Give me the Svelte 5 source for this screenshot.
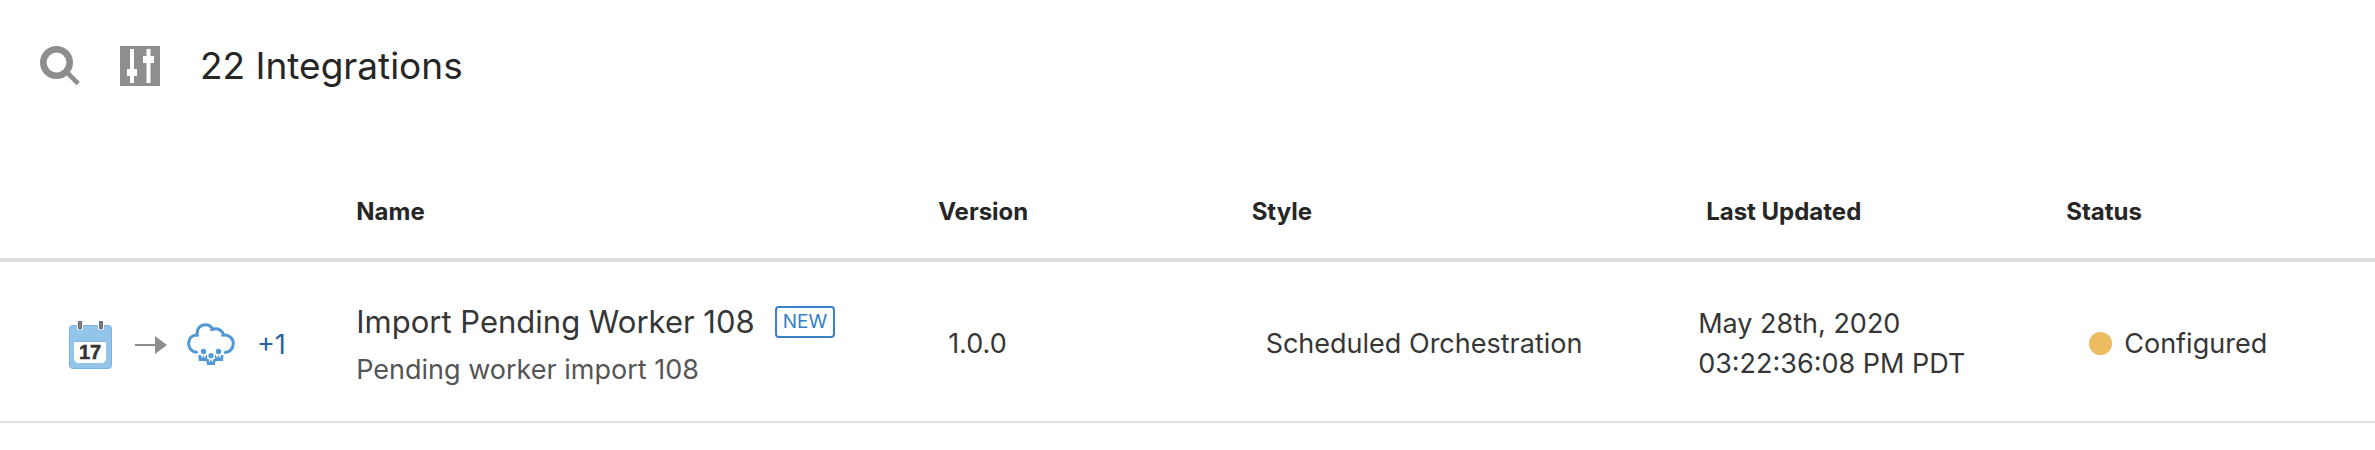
<script>
  const columns = ['Name', 'Version', 'Style', 'Last Updated', 'Status'];
  const rows = [
    {
      name: 'Import Pending Worker',
      number: '108',
      summary: 'Pending worker import 108',
      isNew: true,
      more: 1,
      version: '1.0.0',
      style: 'Scheduled Orchestration',
      date: 'May 28th, 2020',
      time: '03:22:36:08 PM PDT',
      status: 'Configured'
    }
  ];
</script>

<main>
  <header class="toolbar">
    <button type="button" aria-label="Search">
      <svg width="40" height="40" viewBox="0 0 40 40">
        <circle cx="16.5" cy="16.5" r="13.2" fill="none" stroke="#8d8e8f" stroke-width="6.6" />
        <path d="M26 25.5L38.2 37.7" stroke="#8d8e8f" stroke-width="4.6" />
      </svg>
    </button>
    <button type="button" aria-label="Filter">
      <svg width="40" height="40" viewBox="0 0 40 40">
        <path fill="#8d8e8f" d="M0 0h40v40H0z" />
        <path fill="#fff" d="M10 3h4v20h3v7h-3v7h-4v-7H7v-7h3zM26.500 3h4v7h3.500v7h-3.500v20h-4v-20h-3.500v-7h3.500z" />
      </svg>
    </button>
    <h1>22 Integrations</h1>
  </header>

  <table>
    <colgroup>
      <col class="c-icons" /><col class="c-name" /><col class="c-version" />
      <col class="c-style" /><col class="c-updated" /><col class="c-status" />
    </colgroup>
    <thead>
      <tr>
        <td></td>
        {#each columns as column}
          <th scope="col" class:updated={column === 'Last Updated'}>{column}</th>
        {/each}
      </tr>
    </thead>
    <tbody>
      {#each rows as row}
        <tr>
          <td>
            <div class="flow">
              <svg class="calendar" width="44" height="50" viewBox="0 0 44 50" aria-hidden="true">
                <rect x=".5" y="5.500" width="42" height="43" rx="3" fill="#93c4ea" stroke="#78b3e3" />
                <path d="M8 0v9.500h6V0M29 0v9.500h6V0" fill="#fff" />
                <path d="M9.500 1.500h3v7h-3zM30.500 1.500h3v7h-3z" fill="#7f7f83" stroke="#66666a" />
                <path d="M5 21.500h32V40l-3 3H8l-3-3z" fill="#fff" />
                <path d="M5 21.500h32" stroke="#7fb7e4" />
                <text x="21" y="39" text-anchor="middle">17</text>
              </svg>
              <svg class="arrow" width="32" height="18" viewBox="0 0 32 18" aria-hidden="true">
                <path fill="#8d8e8f" d="M0 8h20V0l12 9-12 9v-8H0z" />
              </svg>
              <svg class="cloud" width="48" height="44" viewBox="0 0 48 44" aria-hidden="true">
                <g fill="none" stroke="#5199d6" stroke-width="3" stroke-linecap="round">
                  <path d="M9.500 29.300C4.800 28.700 1.600 25.300 1.600 20.300C1.600 15.600 5 12.200 10.200 11.800C9.500 6.100 13.100 1.700 18.400 1.700C21.900 1.700 24.400 3.600 25.900 6.200C30.800 4.700 35.400 7.500 36.900 12.100C42.300 11.700 46.300 15.500 46.300 20.600C46.300 25.700 42.700 29.300 38.200 29.500" />
                  <path d="M10.200 11.800V13M25.900 6.200L24 7M36.900 12.100L35 12.500" stroke-width="2" />
                </g>
                <g fill="#5199d6">
                  <circle cx="16.500" cy="28.500" r="2.700" /><circle cx="31.500" cy="28.500" r="2.700" />
                  <path d="M11.300 32h2.700l1 3.200 1.500-3.200 1.500 3.200 1-3.200h1v6h-8.200zM28 32h1l1 3.200 1.500-3.200 1.500 3.200 1-3.200h2.500l-.5 6h-8z" />
                  <path d="M19 36h2.500l1 3.500L24 36l1.500 3.500 1-3.500H29l-1.200 6h-7.600z" />
                  <circle cx="24" cy="32.700" r="3.300" fill="#fff" /><circle cx="24" cy="32.700" r="2.600" />
                </g>
              </svg>
              <button type="button" class="more">+{row.more}</button>
            </div>
          </td>
          <td class="name">
            <div class="title">
              <span>{row.name} {row.number}</span>
              {#if row.isNew}<span class="badge">NEW</span>{/if}
            </div>
            <div class="summary">{row.summary}</div>
          </td>
          <td class="version">{row.version}</td>
          <td class="style">{row.style}</td>
          <td><div>{row.date}</div><div>{row.time}</div></td>
          <td class="status"><div class="state"><i></i>{row.status}</div></td>
        </tr>
      {/each}
    </tbody>
  </table>
</main>

<style>
  :global(body) {
    margin: 0;
    background: #fff;
  }
  main {
    font-family: Inter, 'Liberation Sans', sans-serif;
    color: #363636;
  }
  button {
    border: 0;
    padding: 0;
    background: none;
    font: inherit;
    cursor: pointer;
  }
  svg {
    display: block;
    flex: none;
  }
  .toolbar {
    display: flex;
    align-items: center;
    gap: 40px;
    padding: 38px 40px 102px;
  }
  h1 {
    margin: 0;
    font-size: 37px;
    line-height: 56px;
    font-weight: 400;
    color: #262626;
  }
  table {
    width: 100%;
    table-layout: fixed;
    border-collapse: separate;
    border-spacing: 0;
  }
  .c-icons { width: 15%; }
  .c-name { width: 24.5%; }
  .c-version { width: 13.2%; }
  .c-style { width: 18.8%; }
  .c-updated { width: 15.5%; }
  .c-status { width: 13%; }
  th,
  td {
    box-sizing: border-box;
    padding: 0;
    text-align: left;
    white-space: nowrap;
  }
  thead th,
  thead td {
    padding-bottom: 30px;
    border-bottom: 4px solid #e0e0e0;
    font-size: 24px;
    line-height: 32px;
    font-weight: 700;
    color: #262626;
  }
  thead th.updated {
    padding-left: 8px;
  }
  tbody td {
    height: 161px;
    padding-top: 4px;
    border-bottom: 2px solid #e0e0e0;
    font-size: 27px;
    line-height: 40px;
    vertical-align: middle;
  }
  tbody td.name { padding-top: 8px; }
  tbody td.version { padding-left: 10px; }
  tbody td.style { padding-left: 14px; }
  tbody td.status { padding-left: 23px; }
  .flow {
    display: flex;
    align-items: center;
    padding: 2px 0 0 69px;
  }
  .calendar text {
    font: 700 20px 'Liberation Sans', Arial, sans-serif;
    fill: #333;
    stroke: #333;
    stroke-width: 0.5px;
  }
  .arrow { margin: 0 20px 0 22px; }
  .more {
    margin-left: 22px;
    color: #2765a5;
  }
  .title {
    display: flex;
    align-items: center;
    gap: 20px;
    font-size: 31px;
    line-height: 48px;
  }
  .summary {
    line-height: 48px;
    color: #555;
  }
  .badge {
    border: 2px solid #3880c8;
    border-radius: 4px;
    padding: 0 6px;
    font-size: 19px;
    line-height: 28px;
    color: #3880c8;
  }
  .state {
    display: flex;
    align-items: center;
    gap: 12px;
  }
  .state i {
    width: 23px;
    height: 23px;
    border-radius: 50%;
    background: #edbb60;
  }
</style>
